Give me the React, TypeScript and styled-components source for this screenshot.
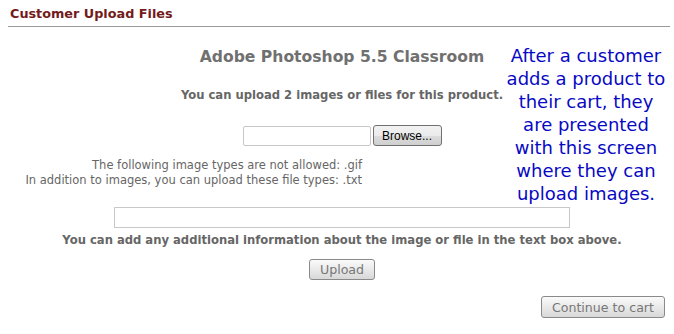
import styled, { createGlobalStyle } from "styled-components";

const Global = createGlobalStyle`
  html, body {
    margin: 0;
    background: #fff;
  }
  body {
    font-family: "DejaVu Sans", Verdana, sans-serif;
    color: #666;
  }
`;

const Page = styled.div`
  position: relative;
  width: 674px;
  height: 334px;
  padding: 0 4px 0 8px;
  box-sizing: border-box;
`;

const Header = styled.h2`
  margin: 0;
  padding: 7px 0 5px 2px;
  font-size: 12.8px;
  line-height: 14px;
  font-weight: bold;
  color: #731a1a;
  border-bottom: 1px solid #999;
`;

const Body = styled.div`
  display: flex;
  flex-direction: column;
  align-items: center;
  padding-left: 6px;
`;

const ProductName = styled.h3`
  margin: 20px 0 0;
  font-size: 15.6px;
  font-weight: bold;
  color: #707070;
  line-height: 20px;
`;

const Note = styled.p<{ $top: number }>`
  margin: ${(p) => p.$top}px 0 0;
  font-size: 11.6px;
  font-weight: bold;
  color: #666;
  line-height: 14px;
`;

const FileRow = styled.div`
  display: flex;
  align-items: center;
  gap: 2px;
  margin-top: 23px;
`;

const FileField = styled.div`
  width: 126px;
  height: 18px;
  border: 1px solid #c8c8c8;
  border-radius: 2px;
  background: #fff;
`;

const BrowseButton = styled.button`
  width: 69px;
  height: 21px;
  padding: 0;
  border: 1px solid #707070;
  border-radius: 3px;
  background: linear-gradient(#f2f2f2 0%, #ebebeb 50%, #dddddd 51%, #cfcfcf 100%);
  font-family: "Liberation Sans", Arial, sans-serif;
  font-size: 12px;
  color: #000;
`;

const Rules = styled.div`
  align-self: flex-start;
  margin-top: 12px;
  width: 348px;
  text-align: right;
  font-size: 11.5px;
  line-height: 15px;
  color: #666;
`;

const InfoBox = styled.div`
  width: 454px;
  height: 19px;
  margin-top: 19px;
  border: 1px solid #c8c8c8;
  background: #fff;
`;

const GreyButton = styled.button<{ $pad: number; $h: number }>`
  height: ${(p) => p.$h}px;
  padding: 0 ${(p) => p.$pad}px;
  border: 1px solid #8a8a8a;
  border-radius: 3px;
  background: linear-gradient(#fafafa, #e6e6e6 60%, #d8d8d8);
  font-family: "DejaVu Sans", Verdana, sans-serif;
  font-size: 12.6px;
  color: #777;
`;

const UploadWrap = styled.div`
  margin-top: 12px;
`;

const Footer = styled.div`
  display: flex;
  justify-content: flex-end;
  margin-top: 16px;
  padding-right: 5px;
`;

const Callout = styled.div`
  position: absolute;
  left: 504px;
  top: 44px;
  width: 164px;
  text-align: center;
  font-family: "DejaVu Sans", Verdana, sans-serif;
  font-size: 18px;
  line-height: 23px;
  color: #0808c4;
`;

export default function App() {
  return (
    <>
      <Global />
      <Page>
        <Header>Customer Upload Files</Header>
        <Body>
          <ProductName>Adobe Photoshop 5.5 Classroom</ProductName>
          <Note $top={21}>You can upload 2 images or files for this product.</Note>
          <FileRow>
            <FileField />
            <BrowseButton>Browse...</BrowseButton>
          </FileRow>
          <Rules>
            The following image types are not allowed: .gif
            <br />
            In addition to images, you can upload these file types: .txt
          </Rules>
          <InfoBox />
          <Note $top={5}>
            You can add any additional information about the image or file in the text box above.
          </Note>
          <UploadWrap>
            <GreyButton $pad={10} $h={21}>Upload</GreyButton>
          </UploadWrap>
        </Body>
        <Footer>
          <GreyButton $pad={10} $h={22}>Continue to cart</GreyButton>
        </Footer>
        <Callout>
          After a customer adds a product to their cart, they are presented with this screen where they can upload images.
        </Callout>
      </Page>
    </>
  );
}
